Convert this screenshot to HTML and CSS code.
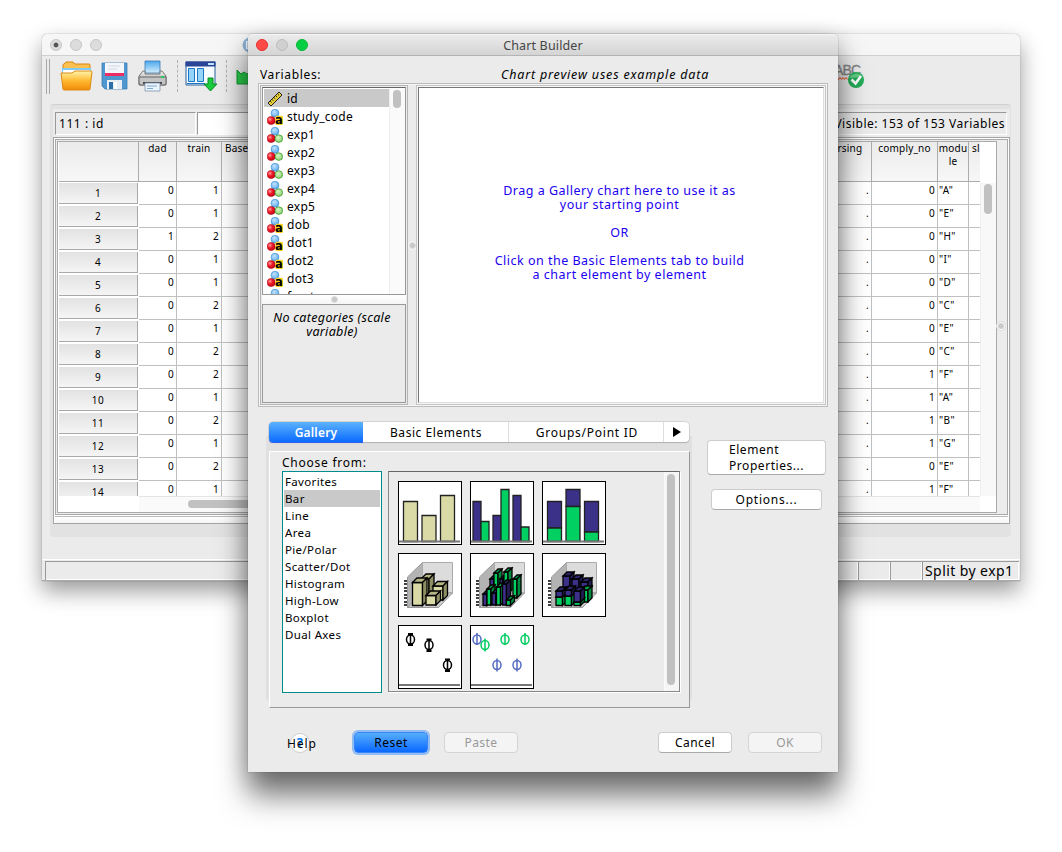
FILE: index.html
```html
<!DOCTYPE html>
<html lang="en">
<head>
<meta charset="utf-8">
<title>Chart Builder</title>
<link rel="stylesheet" href="styles.css">
</head>
<body>
<svg class="defs" width="0" height="0">
  <defs>
    <linearGradient id="gFolder" x1="0" y1="0" x2="0" y2="1"><stop offset="0" stop-color="#fff3a8"/><stop offset=".55" stop-color="#fdb62b"/><stop offset="1" stop-color="#f28a0c"/></linearGradient>
    <linearGradient id="gPrint" x1="0" y1="0" x2="0" y2="1"><stop offset="0" stop-color="#f4f4f4"/><stop offset="1" stop-color="#8b8b8b"/></linearGradient>
    <linearGradient id="gPaper" x1="0" y1="0" x2="0" y2="1"><stop offset="0" stop-color="#4aa8ee"/><stop offset="1" stop-color="#d4eefc"/></linearGradient>
    <radialGradient id="gBlue" cx=".4" cy=".35" r=".7"><stop offset="0" stop-color="#c4e4ff"/><stop offset="1" stop-color="#56a8ea"/></radialGradient>
    <radialGradient id="gRed" cx=".35" cy=".35" r=".7"><stop offset="0" stop-color="#ffa0a0"/><stop offset=".45" stop-color="#ee1c2c"/><stop offset="1" stop-color="#c50012"/></radialGradient>
    <radialGradient id="gGreen" cx=".4" cy=".35" r=".7"><stop offset="0" stop-color="#d6f6c4"/><stop offset="1" stop-color="#86cf6c"/></radialGradient>
    <symbol id="nominal" viewBox="0 0 16 16">
      <circle cx="8" cy="4.2" r="3.9" fill="url(#gBlue)" stroke="#3f8fd0" stroke-width=".7"/>
      <circle cx="4.2" cy="11.5" r="4" fill="url(#gRed)" stroke="#b0101c" stroke-width=".6"/>
      <circle cx="11.8" cy="11.6" r="3.8" fill="url(#gGreen)" stroke="#3d9a2b" stroke-width=".8"/>
    </symbol>
    <symbol id="string" viewBox="0 0 16 16">
      <circle cx="8" cy="4.2" r="3.9" fill="url(#gBlue)" stroke="#3f8fd0" stroke-width=".7"/>
      <circle cx="4.2" cy="11.5" r="4" fill="url(#gRed)" stroke="#b0101c" stroke-width=".6"/>
      <rect x="8.400" y="6.800" width="7.600" height="9.200" rx="1.500" fill="#ffcf20"/>
      <text x="12" y="15.2" text-anchor="middle" class="string-a">a</text>
    </symbol>
    <symbol id="scale" viewBox="0 0 16 16">
      <path d="M1 12 12 1l3 3L4 15z" fill="#e8cf34" stroke="#222" stroke-width="1"/>
      <path d="m3.2 10.2 1.4 1.4m.4-3.2 1.4 1.4m.5-3.3 1.4 1.4m.4-3.2 1.4 1.4M10.600 3l1.400 1.400" stroke="#222" stroke-width="1"/>
    </symbol>
  </defs>
</svg>

<section class="window data-window">
  <header class="titlebar">
    <i class="light off dot"></i><i class="light off"></i><i class="light off"></i>
    <svg class="app-icon" width="16" height="16" viewBox="0 0 16 16"><circle cx="8" cy="8" r="7.5" fill="#8eb4d6"/><path d="M4 4h8v8H4z" fill="#eef5fb"/><path d="M5.500 6h6M5.500 8h6M5.500 10h6" stroke="#5d8fbd"/></svg>
  </header>
  <div class="toolbar">
    <i class="grip"></i>
    <svg class="t-folder" width="34" height="32" viewBox="0 0 34 32">
      <path d="M3 8V4q0-1 1-1l2-2h7l2 2h14q1 0 1 1v6H3z" fill="#fbc050" stroke="#d98410"/>
      <path d="M2 7h29v12H2z" fill="#7fcbf8"/><path d="M3 9h27v6H3z" fill="#fff"/>
      <path d="M1 12h11l3-2h16q1 0 1 1l-2 17q0 1-1 1H4q-1 0-1-1z" fill="url(#gFolder)" stroke="#dd8a14"/>
    </svg>
    <svg class="t-floppy" width="27" height="28" viewBox="0 0 27 28">
      <path d="M1 1h25v26H4l-3-3z" fill="#4f97cf" stroke="#3b7fb8" stroke-width=".8"/>
      <path d="M4 1h19v12H4z" fill="#f4f6fb"/><path d="M4 11h19v3H4z" fill="#ee2e62"/><path d="M7 4h12M7 7h9" stroke="#cfd6e2"/>
      <path d="M6 18h15v9H6z" fill="#e9eef4"/><path d="M8 20h4v7H8z" fill="#2e6fa9"/><path d="M13 20h3v7h-3z" fill="#fff"/>
    </svg>
    <svg class="t-printer" width="30" height="32" viewBox="0 0 30 32">
      <path d="M7 1h15v12H7z" fill="url(#gPaper)" stroke="#3a78b4" stroke-width=".8"/>
      <path d="M5 11h2v3h15v-3h2l4 5v9H1v-9z" fill="url(#gPrint)" stroke="#777"/>
      <path d="M1 17h27v6q0 2-2 2H3q-2 0-2-2z" fill="#c4c4c4" stroke="#666"/><path d="M5 22h19v2H5z" fill="#444"/>
      <path d="M7 23h15v8H7z" fill="#eaf5fd" stroke="#7b93ab" stroke-width=".8"/><path d="M9 26h10M9 28.500h6" stroke="#7ea7cd"/>
      <path d="M23 17h3" stroke="#29c95d" stroke-width="2"/>
    </svg>
    <i class="dash"></i>
    <svg class="t-vars" width="33" height="32" viewBox="0 0 33 32">
      <path d="M1 2h29v23H1z" fill="#f5fbff" stroke="#27619f"/><path d="M.5 1.500h30v5H.5z" fill="#2a4595"/><path d="M23 4h6" stroke="#bfe0ff" stroke-width="2"/>
      <path d="M3.500 8.500h6v13h-6zM12.500 8.500h6v13h-6z" fill="#93d4f8" stroke="#1c74c4"/><path d="M2 23.500h18" stroke="#1c74c4"/>
      <path d="M23 18h5v6h4l-6.500 7L19 24h4z" fill="#19cc3c" stroke="#0b8a22"/>
    </svg>
    <i class="dash second"></i>
    <svg class="t-undo" width="26" height="18" viewBox="0 0 26 18"><path d="M1 1l4 4 3-2 3 2 6-2 8 6-2 8-7-2H1z" fill="#2ccb4a" stroke="#0f9a2e"/></svg>
    <svg class="t-spell" width="40" height="30" viewBox="0 0 40 30">
      <text x="6" y="15" class="abc">ABC</text>
      <path d="M6 17.500l1.500 2 1.500-2 1.500 2 1.500-2 1.500 2 1.500-2 1.500 2 1.500-2 1.500 2" fill="none" stroke="#ee4a1d"/>
      <circle cx="28" cy="20" r="8" fill="#23ad58"/><path d="M21.500 18a7 6 0 0 1 13-1z" fill="#76d694" opacity=".8"/>
      <path d="m23.500 19.500 4 4 5.500-7.500" fill="none" stroke="#fff" stroke-width="2.600"/>
    </svg>
  </div>
  <div class="data-panel">
    <div class="cell-bar">
      <div class="cell-name">111 : id</div>
      <div class="cell-value"></div>
      <div class="visible-count">Visible: 153 of 153 Variables</div>
    </div>
    <div class="data-frame">
      <div class="data-inner">
        <div class="grid-area">
          <div class="grid-view" id="grid"></div>
          <div class="v-track"><i class="corner"></i><i class="thumb"></i></div>
          <div class="h-track"><i class="thumb"></i></div>
        </div>
        <div class="side-split"><i class="knob"></i></div>
      </div>
      <div class="bottom-strip"></div>
    </div>
  </div>
  <footer class="status"><span></span><span></span><span></span><span class="split-by">Split by exp1</span></footer>
</section>

<section class="window dialog">
  <header class="titlebar">
    <i class="light red"></i><i class="light gray"></i><i class="light green"></i>
    <h1>Chart Builder</h1>
  </header>
  <div class="captions"><span class="cap-vars">Variables:</span><span class="cap-preview">Chart preview uses example data</span></div>
  <div class="builder">
    <div class="left-col">
      <div class="var-box">
        <div class="var-list" id="vars"></div>
        <div class="var-scroll"><i class="thumb"></i></div>
      </div>
      <div class="h-split"><i class="knob"></i></div>
      <div class="categories">No categories (scale<br>variable)</div>
    </div>
    <div class="v-split"><i class="knob"></i></div>
    <div class="canvas"><div class="hint">Drag a Gallery chart here to use it as<br>your starting point<br><br>OR<br><br>Click on the Basic Elements tab to build<br>a chart element by element</div></div>
  </div>
  <div class="middle">
    <div class="tab-group">
      <nav class="tabs"><span class="active">Gallery</span><span class="t2">Basic Elements</span><span class="t3">Groups/Point ID</span><span class="t4"><svg width="10" height="10" viewBox="0 0 10 10"><path d="M1 0v10l8-5z"/></svg></span></nav>
      <div class="tab-body">
        <div class="choose">Choose from:</div>
        <div class="choose-row">
          <ul class="types"><li>Favorites</li><li class="sel">Bar</li><li>Line</li><li>Area</li><li>Pie/Polar</li><li>Scatter/Dot</li><li>Histogram</li><li>High-Low</li><li>Boxplot</li><li>Dual Axes</li></ul>
          <div class="gallery">
            <div class="thumbs">
              <svg viewBox="1 1 62 62"><g class="tan"><path d="M5.500 20.500h14v40h-14zM24 34.500h14v26H24zM42.500 14.500h14v46h-14z"/></g><path class="axis" d="M1 60.500h61"/></svg>
              <svg viewBox="1 1 62 62"><g class="navy"><path d="M3 20.500h8v40H3zM23 34.500h8v26h-8zM43 14.500h8v46h-8z"/></g><g class="lime"><path d="M11 40.500h8v20h-8zM31 8.500h8v52h-8zM51 46h8v14.500h-8z"/></g><path class="axis" d="M1 60.500h61"/></svg>
              <svg viewBox="1 1 62 62"><g class="navy"><path d="M5.500 20.500h14V47h-14zM24 8.500h14v17H24zM42.500 20.500h14V51h-14z"/></g><g class="lime"><path d="M5.500 47h14v13.500h-14zM24 25.500h14v35H24zM42.500 51h14v9.500h-14z"/></g><path class="axis" d="M1 60.500h61"/></svg>
              <svg viewBox="1 1 62 62" data-boxes="tan"></svg>
              <svg viewBox="1 1 62 62" data-boxes="cluster"></svg>
              <svg viewBox="1 1 62 62" data-boxes="stack"></svg>
              <svg viewBox="1 1 62 62"><g class="err" stroke="#000"><path d="M12.500 9v11M31 14.500v12M49.500 34v12"/><path d="M10 9h5M10 20h5M28.500 14.500h5M28.500 26h5M47 34.500h5M47 46h5" stroke-width="2"/><ellipse cx="12.500" cy="14.500" rx="4" ry="4.500"/><ellipse cx="31" cy="20" rx="4" ry="4.500"/><ellipse cx="49.500" cy="40" rx="4" ry="4.500"/></g><path class="axis" d="M1 60h61"/></svg>
              <svg viewBox="1 1 62 62"><g class="err" stroke="#536bc0"><path d="M7 8v12M27 33.500v13M47 33.500v13"/><ellipse cx="7" cy="14.500" rx="4" ry="4.500"/><ellipse cx="27" cy="40" rx="4" ry="4.500"/><ellipse cx="47" cy="40" rx="4" ry="4.500"/></g><g class="err" stroke="#00cc60"><path d="M15 13.500v13M35 8v12M55 8v12"/><ellipse cx="15" cy="20" rx="4" ry="4.500"/><ellipse cx="35" cy="14.500" rx="4" ry="4.500"/><ellipse cx="55" cy="14.500" rx="4" ry="4.500"/></g><path class="axis" d="M1 60h61"/></svg>
            </div>
            <div class="g-scroll"><i class="thumb"></i></div>
          </div>
        </div>
      </div>
    </div>
    <div class="side-buttons"><button class="btn element"><span>Element<br>Properties...</span></button><button class="btn options">Options...</button></div>
  </div>
  <div class="actions">
    <div class="help"><i>?</i><span>Help</span></div>
    <button class="btn reset">Reset</button><button class="btn disabled paste">Paste</button><button class="btn cancel">Cancel</button><button class="btn disabled ok">OK</button>
  </div>
</section>
<script src="script.js"></script>
</body>
</html>
```
FILE: styles.css
```css
* { box-sizing: border-box; }
html, body { margin: 0; width: 1062px; height: 852px; overflow: hidden; background: #fff; }
body { position: relative; font: 12px/14px "Noto Sans", "Open Sans", sans-serif; letter-spacing: .2px; color: #000; }
i { font-style: normal; display: block; }
svg { display: block; flex: none; }
.defs { position: absolute; }
.string-a { font: bold 11.5px "DejaVu Sans", sans-serif; letter-spacing: 0; }

.window { position: absolute; background: #ebebeb; border-radius: 5px 5px 0 0; display: flex; flex-direction: column; }
.data-window { left: 42px; top: 34px; width: 978px; height: 547px; box-shadow: 0 0 1px rgba(0,0,0,.6), 0 10px 22px rgba(0,0,0,.4); }
.dialog { left: 248px; top: 34px; width: 590px; height: 738px; box-shadow: 0 0 1px rgba(0,0,0,.7), 0 24px 30px rgba(0,0,0,.52), 0 4px 24px rgba(0,0,0,.2); }
.titlebar { height: 22px; flex: none; display: flex; align-items: center; padding-left: 8px; gap: 8px; border-radius: 5px 5px 0 0; background: #f6f6f6; border-bottom: 1px solid #d0d0d0; }
.dialog .titlebar { background: linear-gradient(#ececec, #d4d4d4); border-color: #b4b4b4; box-shadow: inset 0 1px #f6f6f6; }
.titlebar h1 { margin: 0; font: inherit; font-size: 12.5px; color: #444; width: 100px; margin-left: 177px; padding-top: 2px; text-align: center; white-space: nowrap; letter-spacing: .15px; }
.light { width: 12px; height: 12px; border-radius: 50%; flex: none; }
.off, .gray { background: #dcdcdc; border: 1px solid #c6c6c6; }
.gray { background: #d0d0d0; border-color: #bcbcbc; }
.dot { background: radial-gradient(#555 0 2px, #dcdcdc 2.8px); }
.red { background: #ff4a45; border: 1px solid #e5302e; }
.green { background: #06cf44; border: 1px solid #06b838; }
.app-icon { margin-left: 132px; }

.toolbar { height: 48px; flex: none; display: flex; align-items: flex-start; padding: 3px 0 0 4px; }
.grip { width: 4px; height: 35px; border: solid #a8a8a8; border-width: 0 1px; }
.t-folder { margin: 2px 0 0 10px; }
.t-floppy { margin: 3px 0 0 7px; }
.t-printer { margin: 1px 0 0 10px; }
.dash { height: 32px; border-left: 1px dashed #b0b0b0; margin: 1px 8px 0 9px; }
.t-vars { margin: 1px 0 0 -1px; }
.dash.second { margin: 1px 9px 0 8px; }
.t-undo { margin-top: 10px; }
.t-spell { margin: 1px 0 0 566px; }
.abc { font: 14px "Liberation Sans", sans-serif; fill: #858585; stroke: #858585; stroke-width: .3; letter-spacing: -.8px; }

.data-panel { margin: 0 9px 0 8px; height: 433px; background: #e2e2e2; border-top: 1px solid #cfcfcf; border-radius: 4px; padding: 4px 1px 0 3px; flex: none; }
.cell-bar { height: 28px; background: #ebebeb; padding: 3px 3px 0 2px; display: flex; font-size: 12px; line-height: 22px; letter-spacing: .3px; }
.cell-name, .cell-value, .visible-count { height: 23px; border: 1px solid; border-color: #999 #fff #fff #999; }
.cell-name { width: 141px; padding-left: 3px; letter-spacing: .55px; }
.cell-value { width: 600px; margin-left: 1px; background: #fff; }
.visible-count { flex: 1; text-align: right; padding-right: 1px; white-space: nowrap; letter-spacing: .5px; }
.data-frame { height: 387px; border: 1px solid #a5a5a5; background: #fff; padding: 1px; }
.data-inner { display: flex; height: 376px; border: 1px solid #aaa; padding: 1px 0 1px 1px; background: #ececec; }
.grid-area { flex: none; width: 940px; height: 372px; background: #fff; border: 1px solid #aaa; padding-left: 1px; display: grid; grid-template: 354px 16px / 921px 16px; }
.grid-view { overflow: hidden; font-size: 10px; letter-spacing: .2px; }
.grow { display: grid; grid-template-columns: 80px 38px 45px 278px 316px 56px 66px 31px 60px; height: 23px; }
.grow > span { border-right: 1px solid #c0c0c0; border-bottom: 1px solid #c0c0c0; text-align: right; padding: 1px 2px 0 0; line-height: 15px; overflow: hidden; }
.grow > span.str { text-align: left; padding: 1px 0 0 1px; letter-spacing: .4px; }
.grow > span.num { text-align: center; background: linear-gradient(#e2e2e2, #f5f5f5); border: solid #a9a9a9; border-width: 0 1px 1px 0; margin: 1px 1px 1px 0; line-height: 19px; padding: 1px 0 0; letter-spacing: .5px; }
.grow.head { height: 40px; }
.grow.head > span { text-align: center; background: linear-gradient(#ebebeb, #f7f7f7); border-color: #acacac; padding: 0; line-height: 13px; }
.grow.head > .l { text-align: left; padding-left: 3px; }
.v-track { background: #f8f8f8; border-left: 1px solid #eee; }
.corner { height: 41px; background: #fff; margin-left: -1px; }
.thumb { background: #c1c1c1; border-radius: 4px; width: 8px; }
.v-track .thumb { height: 30px; margin: 1px 0 0 3px; }
.h-track { background: #fafafa; border-top: 1px solid #e5e5e5; margin-left: 80px; }
.h-track .thumb { width: 500px; height: 8px; margin: 3px 0 0 49px; }
.side-split { flex: 1; display: flex; align-items: center; justify-content: center; }
.knob { width: 8px; height: 8px; border-radius: 50%; background: #c9c9c9; border: 1px solid #fff; box-shadow: 0 0 0 1px #ddd; }
.side-split .knob { margin: 0 5px 2px 0; }
.bottom-strip { height: 7px; border-top: 1px solid #bbb; background: linear-gradient(#fff, #f5f5f5); margin-top: 1px; }
.status { margin-top: auto; height: 22px; display: grid; grid-template-columns: 813px 32px 32px 97px; padding: 1px 1px 1px 3px; border-top: 1px solid #fff; border-bottom: 1px solid #aaa; }
.status span { border: solid #999; border-width: 1px 0 0 1px; box-shadow: inset -1px -1px #fff; }
.split-by { font-size: 14px; line-height: 18px; padding-left: 2px; letter-spacing: .42px; white-space: nowrap; }

.captions { height: 27px; flex: none; display: flex; padding: 12px 0 0 12px; }
.cap-vars { width: 241px; letter-spacing: .65px; }
.cap-preview { font-style: italic; font-size: 12.5px; white-space: nowrap; letter-spacing: .82px; }
.builder { margin: 0 10px; height: 324px; flex: none; border: 1px solid #bbb; display: flex; padding: 1px; box-shadow: inset 0 0 0 1px #f6f6f6; }
.left-col { width: 148px; border: 1px solid #b5b5b5; padding: 1px; flex: none; display: flex; flex-direction: column; }
.var-box { height: 208px; display: flex; border: 1px solid #999; border-top-color: #666; background: #fff; padding: 1px 0 0 1px; overflow: hidden; }
.var-list { width: 125px; height: 205px; overflow: hidden; line-height: 20px; flex: none; letter-spacing: .25px; }
.var-list div { height: 18px; display: flex; gap: 4px; padding-left: 3px; }
.var-list div.sel { background: #c9c9c9; }
.var-list svg { margin-top: 2px; }
.var-scroll { flex: 1; background: #fafafa; border-left: 1px solid #eee; }
.var-scroll .thumb { margin: 1px 0 0 3px; height: 18px; }
.h-split { height: 9px; background: linear-gradient(#fff, #f5f5f5); display: flex; justify-content: center; align-items: center; }
.h-split .knob, .v-split .knob { box-shadow: none; border-color: #ddd; width: 7px; height: 7px; }
.categories { flex: 1; border: 1px solid #999; text-align: center; font-style: italic; font-size: 12.5px; padding: 6px 4px 0 0; letter-spacing: .33px; white-space: nowrap; }
.v-split { width: 8px; flex: none; display: flex; align-items: center; justify-content: center; }
.v-split .knob { box-shadow: 0 0 0 1px #f6f6f6; }
.canvas { flex: 1; border: 1px solid #c5c5c5; padding: 1px; background: #f6f6f6; }
.hint { height: 316px; background: #fff; border: 1px solid #777; border-right-color: #ddd; border-bottom-color: #ddd; color: #1c00f0; text-align: center; padding: 96px 3px 0 0; font-size: 12.5px; letter-spacing: .5px; }

.middle { display: flex; flex: none; height: 295px; margin-top: 7px; }
.tab-group { margin-left: 18px; width: 426px; height: 287px; flex: none; padding: 8px 2px 0 3px; background: linear-gradient(transparent 22px, #e0e0e0 22px); border-radius: 4px; }
.tabs { height: 20px; width: 420px; display: flex; background: #fff; border-radius: 4px; line-height: 21px; text-align: center; box-shadow: 0 0 0 .5px #bbb, 0 1px 1px #aaa; letter-spacing: .55px; }
.tabs span { border-right: 1px solid #ddd; }
.tabs .active { width: 94px; border-radius: 4px 0 0 4px; background: linear-gradient(#5cb2fd, #0a6bff); color: #fff; font-weight: 600; border: 0; box-shadow: 0 1px #3060ee; letter-spacing: .2px; }
.tabs .t2 { width: 146px; padding-left: 1px; }
.tabs .t3 { width: 155px; letter-spacing: .75px; padding-left: 2px; }
.tabs .t4 { flex: 1; border: 0; display: flex; align-items: center; justify-content: center; }
.tab-body { margin-top: 9px; height: 257px; background: #ebebeb; border: 1px solid; border-color: #fff #999 #999 #fff; padding: 4px 9px 0 12px; }
.choose { height: 15px; line-height: 14px; letter-spacing: .75px; }
.choose-row { display: flex; gap: 6px; }
.types { list-style: none; margin: 0; width: 100px; height: 222px; border: 1px solid #008c8c; background: #fff; padding: 1px; font-size: 11.5px; letter-spacing: .35px; line-height: 17px; }
.types li { padding-left: 1px; height: 17px; }
.types .sel { background: #c9c9c9; }
.gallery { width: 292px; height: 221px; border: 1px solid #888; border-top-color: #666; display: flex; box-shadow: 1px 1px #fff; }
.thumbs { width: 275px; padding: 9px; display: grid; grid-template: repeat(3, 64px) / repeat(3, 64px); gap: 8px; }
.thumbs svg { width: 64px; height: 64px; background: #fff; border: 1px solid #000; }
.tan path, .navy path, .lime path { stroke: #222; stroke-width: 1.3; }
.tan { fill: #dadaa7; } .navy { fill: #3b3189; } .lime { fill: #00cf61; }
.axis { stroke: #777; stroke-width: 1.8; }
.err { fill: none; stroke-width: 1.5; }
.g-scroll { flex: 1; background: #f5f5f5; border-left: 1px solid #fafafa; }
.g-scroll .thumb { margin: 2px 0 0 2px; height: 211px; }
.side-buttons { margin: 26px 0 0 15px; display: flex; flex-direction: column; align-items: center; gap: 14px; }
.btn { font: inherit; letter-spacing: .45px; padding: 0; background: #fff; border: 1px solid #ccc; border-bottom-color: #aaa; border-radius: 4px; height: 21px; width: 74px; line-height: 18px; color: #000; flex: none; }
.element { width: 119px; height: 35px; line-height: 16px; text-align: left; padding-left: 21px; letter-spacing: .55px; }
.element span { display: block; }
.options { width: 111px; letter-spacing: .75px; }
.actions { display: flex; height: 63px; padding: 23px 16px 0 38px; align-items: flex-start; flex: none; }
.help { width: 30px; display: grid; margin-right: 38px; }
.help > * { grid-area: 1 / 1; }
.help i { width: 20px; height: 20px; border-radius: 50%; background: #fff; border: 1px solid #ccc; color: #147dfc; text-align: center; font-size: 13px; line-height: 17px; margin: 1px 0 0 4px; font-weight: bold; }
.help span { line-height: 23px; white-space: nowrap; padding-left: 1px; letter-spacing: .9px; }
.reset { background: linear-gradient(#56aefd, #0a68ff); border-color: #3a85f5; box-shadow: 0 0 0 2px #8fbcf3; }
.disabled { color: #999; background: #f4f4f4; border-color: #d4d4d4; }
.paste { margin-left: 16px; } .cancel { margin-left: 140px; } .ok { margin-left: 16px; }
```
FILE: script.js
```js
// Data grid
const rows = [
  [0, 1, 0, 'A'], [0, 1, 0, 'E'], [1, 2, 0, 'H'], [0, 1, 0, 'I'], [0, 1, 0, 'D'], [0, 2, 0, 'C'], [0, 1, 0, 'E'],
  [0, 2, 0, 'C'], [0, 2, 1, 'F'], [0, 1, 1, 'A'], [0, 2, 1, 'B'], [0, 1, 1, 'G'], [0, 2, 0, 'E'], [0, 1, 1, 'F']
];
document.getElementById('grid').innerHTML =
  '<div class="grow head"><span></span><span>dad</span><span>train</span><span class="l">Base</span><span></span><span>nursing</span><span>comply_no</span><span>modu<br>le</span><span class="l">sl</span></div>' +
  rows.map((r, i) => `<div class="grow"><span class="num">${i + 1}</span><span>${r[0]}</span><span>${r[1]}</span><span></span><span></span><span>.</span><span>${r[2]}</span><span class="str">"${r[3]}"</span><span></span></div>`).join('');

// Variable list
const vars = [['scale', 'id'], ['string', 'study_code'], ['nominal', 'exp1'], ['nominal', 'exp2'], ['nominal', 'exp3'],
  ['nominal', 'exp4'], ['nominal', 'exp5'], ['string', 'dob'], ['string', 'dot1'], ['string', 'dot2'], ['string', 'dot3'], ['nominal', 'f_cat']];
document.getElementById('vars').innerHTML = vars.map(([t, n], i) =>
  `<div${i ? '' : ' class="sel"'}><svg width="16" height="16"><use href="#${t}"/></svg><span>${n}</span></div>`).join('');

// 3-D bars: [x, y, width, height, depth, palette]
const palettes = { t: ['#dadaa7', '#b5b584', '#8f8f65'], n: ['#3b3189', '#2c2468', '#241d55'], g: ['#00cf61', '#00a04b', '#008a40'] };
const sets = {
  tan: [[23, 26, 8, 22, 5, 't'], [35, 33, 10, 14, 4.5, 't'], [14.5, 29.5, 10, 23, 4.5, 't'], [28, 42.5, 10, 9.5, 4.5, 't']],
  cluster: [[20, 26, 4, 15, 4, 'n'], [24, 20, 4, 20, 4, 'g'], [30, 26, 3, 15, 4, 'n'], [34, 19, 4, 22, 4, 'g'], [43, 26, 4, 19, 4, 'g'],
    [13, 41, 4, 11.5, 4, 'n'], [17, 36, 4, 16, 4, 'g'], [22, 40, 4, 12, 4, 'n'], [26.5, 34, 4, 18, 4, 'g'], [32.5, 31, 4, 21, 4, 'n'], [36.5, 47, 4, 5.5, 4, 'g']],
  stack: [[21, 23, 7, 20, 4, 'n'], [30, 26, 7, 14, 4, 'n'], [39, 29, 7, 9, 4, 'n'], [39, 37, 7, 12, 4, 'g'],
    [14, 44, 6.5, 8.5, 4, 'g'], [14, 38, 6.5, 6, 4, 'n'], [23, 43, 6.5, 9.5, 4, 'g'], [23, 37, 6.5, 6, 4, 'n'], [32, 49, 6.5, 3.5, 4, 'g'], [32, 38, 6.5, 11, 4, 'n']]
};
document.querySelectorAll('[data-boxes]').forEach(svg => {
  let s = '<path d="M9.5 24 24.5 9.500V40l-15 14.500z" fill="#b3b3b3" stroke="#999"/><path d="M24.500 9.500h30V40h-30z" fill="#dcdcdc" stroke="#aaa"/><path d="m9.500 54.500 15-14.500h30l-14 14.500z" fill="#ccc" stroke="#999"/><path d="M6 28h3M6 31h3M6 35h3M6 38h3M6 42h3M6 45h3M6 49h3M6 52h3" stroke="#000" stroke-width="1.600"/>';
  for (const [x, y, w, h, d, c] of sets[svg.dataset.boxes]) {
    const p = palettes[c];
    s += `<g stroke="#000" stroke-width="1.300"><path fill="${p[0]}" d="M${x} ${y}h${w}v${h}h${-w}z"/><path fill="${p[1]}" d="M${x} ${y}l${d} ${-d}h${w}l${-d} ${d}z"/><path fill="${p[2]}" d="M${x + w} ${y}l${d} ${-d}v${h}l${-d} ${d}z"/></g>`;
  }
  svg.innerHTML = s;
});
```
